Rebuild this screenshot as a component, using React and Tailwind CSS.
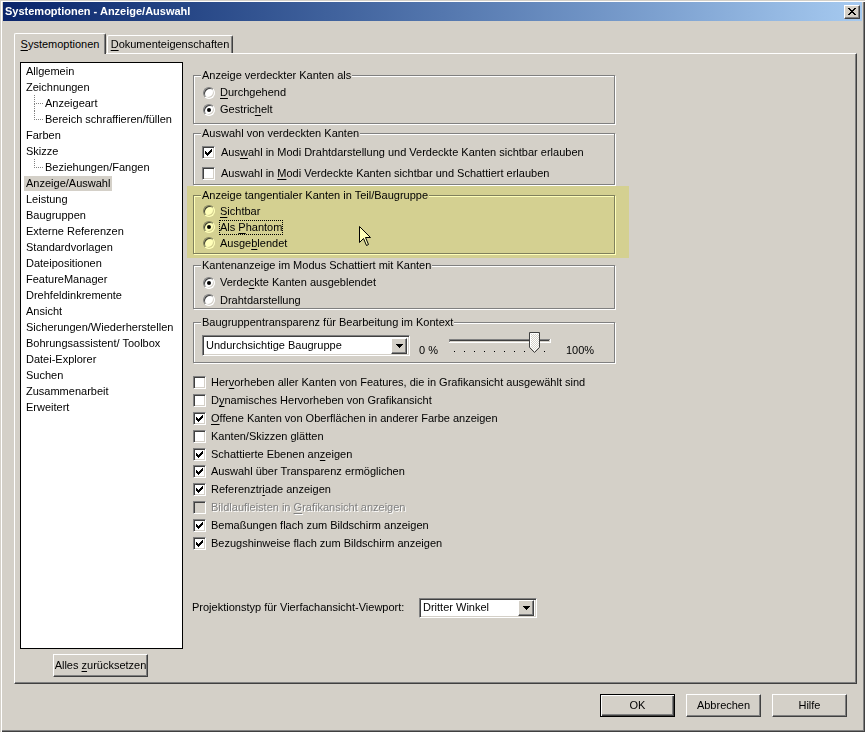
import React from 'react';

const raised = 'border border-t-white border-l-white border-r-[#404040] border-b-[#404040] shadow-[inset_-1px_-1px_0_#808080]';
const sunken = 'border border-t-[#808080] border-l-[#808080] border-r-white border-b-white shadow-[inset_1px_1px_0_#404040,inset_-1px_-1px_0_#d4d0c8]';

function U({ children }) {
  return <span className="underline underline-offset-[2px]">{children}</span>;
}

function Radio({ checked }) {
  return (
    <span className="flex h-3 w-3 shrink-0 items-center justify-center rounded-full border border-t-[#808080] border-l-[#808080] border-r-white border-b-white bg-white shadow-[inset_1px_1px_0_#404040,inset_-1px_-1px_0_#d4d0c8]">
      {checked && <span className="h-1 w-1 rounded-full bg-black" />}
    </span>
  );
}

function Check({ checked, disabled }) {
  return (
    <span className={`flex h-[13px] w-[13px] shrink-0 items-center justify-center ${sunken} ${disabled ? 'bg-[#d4d0c8]' : 'bg-white'}`}>
      {checked && (
        <svg width="7" height="7" viewBox="0 0 7 7" shapeRendering="crispEdges">
          {[2, 3, 4, 3, 2, 1, 0].map((y, x) => (
            <rect key={x} x={x} y={y} width="1" height="3" fill="#000" />
          ))}
        </svg>
      )}
    </span>
  );
}

function Arrow() {
  return (
    <svg width="7" height="4" viewBox="0 0 7 4" shapeRendering="crispEdges">
      <rect x="0" y="0" width="7" height="1" />
      <rect x="1" y="1" width="5" height="1" />
      <rect x="2" y="2" width="3" height="1" />
      <rect x="3" y="3" width="1" height="1" />
    </svg>
  );
}

function Combo({ value, className }) {
  return (
    <div className={`flex items-center bg-white pl-[3px] pr-[2px] ${sunken} ${className}`}>
      <span className="flex-1 truncate">{value}</span>
      <span className={`flex h-[16px] w-[16px] shrink-0 items-center justify-center bg-[#d4d0c8] ${raised}`}>
        <Arrow />
      </span>
    </div>
  );
}

function Group({ title, children, className = '' }) {
  return (
    <fieldset className={`w-[422px] border border-[#808080] shadow-[1px_1px_0_#fff,inset_1px_1px_0_#fff] ${className}`}>
      <legend className="ml-[7px] bg-[#d4d0c8] px-[1px] leading-[13px]">{title}</legend>
      {children}
    </fieldset>
  );
}

function Branch({ last }) {
  return (
    <div className="flex h-4 w-[9px] shrink-0 flex-col">
      <div className="h-[9px] border-b border-l border-dotted border-[#808080]" />
      {!last && <div className="h-[7px] border-l border-dotted border-[#808080]" />}
    </div>
  );
}

const tree = [
  { t: 'Allgemein' },
  { t: 'Zeichnungen' },
  { t: 'Anzeigeart', c: true },
  { t: 'Bereich schraffieren/füllen', c: true, last: true },
  { t: 'Farben' },
  { t: 'Skizze' },
  { t: 'Beziehungen/Fangen', c: true, last: true },
  { t: 'Anzeige/Auswahl', sel: true },
  { t: 'Leistung' },
  { t: 'Baugruppen' },
  { t: 'Externe Referenzen' },
  { t: 'Standardvorlagen' },
  { t: 'Dateipositionen' },
  { t: 'FeatureManager' },
  { t: 'Drehfeldinkremente' },
  { t: 'Ansicht' },
  { t: 'Sicherungen/Wiederherstellen' },
  { t: 'Bohrungsassistent/ Toolbox' },
  { t: 'Datei-Explorer' },
  { t: 'Suchen' },
  { t: 'Zusammenarbeit' },
  { t: 'Erweitert' },
];

const options = [
  [false, <>Her<U>v</U>orheben aller Kanten von Features, die in Grafikansicht ausgewählt sind</>],
  [false, <>D<U>y</U>namisches Hervorheben von Grafikansicht</>],
  [true, <><U>O</U>ffene Kanten von Oberflächen in anderer Farbe anzeigen</>],
  [false, 'Kanten/Skizzen glätten'],
  [true, <>Schattierte Ebenen an<U>z</U>eigen</>],
  [true, 'Auswahl über Transparenz ermöglichen'],
  [true, <>Referenztr<U>i</U>ade anzeigen</>],
  [false, <>Bildlaufleisten in <U>G</U>rafikansicht anzeigen</>, true],
  [true, 'Bemaßungen flach zum Bildschirm anzeigen'],
  [true, 'Bezugshinweise flach zum Bildschirm anzeigen'],
];

function Slider() {
  const ticks = [10, 20, 30, 40, 50, 60, 70, 80, 90, 100];
  return (
    <svg width="112" height="24" viewBox="0 0 112 24" shapeRendering="crispEdges" className="-mt-[5px] shrink-0">
      <defs>
        <pattern id="dither" width="2" height="2" patternUnits="userSpaceOnUse">
          <rect width="2" height="2" fill="#d4d0c8" />
          <rect width="1" height="1" fill="#fff" />
          <rect x="1" y="1" width="1" height="1" fill="#fff" />
        </pattern>
      </defs>
      <rect x="5" y="9" width="101" height="1" fill="#808080" />
      <rect x="5" y="9" width="1" height="4" fill="#808080" />
      <rect x="6" y="10" width="99" height="1" fill="#404040" />
      <rect x="6" y="11" width="99" height="1" fill="#d4d0c8" />
      <rect x="5" y="12" width="102" height="1" fill="#fff" />
      <rect x="106" y="9" width="1" height="4" fill="#fff" />
      {ticks.map((x) => (
        <rect key={x} x={x} y="21" width="1" height="1" fill="#000" />
      ))}
      <polygon points="85.5,2.5 95.5,2.5 95.5,17.5 90.5,22.5 85.5,17.5" fill="url(#dither)" stroke="#404040" strokeWidth="1" shapeRendering="auto" />
      <polyline points="86.5,17 86.5,3.5 94.5,3.5" fill="none" stroke="#fff" strokeWidth="1" shapeRendering="auto" />
    </svg>
  );
}

export default function App() {
  return (
    <div className="flex h-[732px] w-[865px] flex-col overflow-hidden bg-[#d4d0c8] px-[3px] pt-[2px] font-['Liberation_Sans',Arial,sans-serif] text-[11px] leading-[13px] text-black shadow-[inset_1px_1px_0_#d4d0c8,inset_2px_2px_0_#fff,inset_-1px_-1px_0_#404040,inset_-2px_-2px_0_#808080]">
      {/* Titelleiste */}
      <div className="flex h-[19px] shrink-0 items-center bg-linear-to-r from-[#0a246a] to-[#a6caf0] pl-[2px] pr-[2px]">
        <span className="font-bold text-white">Systemoptionen - Anzeige/Auswahl</span>
        <span className={`ml-auto flex h-[14px] w-[16px] items-center justify-center bg-[#d4d0c8] ${raised}`}>
          <svg width="8" height="7" viewBox="0 0 8 7" shapeRendering="crispEdges">
            <path d="M0 0h2v1h-2zM6 0h2v1h-2zM1 1h2v1h-2zM5 1h2v1h-2zM2 2h4v1h-4zM3 3h2v1h-2zM2 4h4v1h-4zM1 5h2v1h-2zM5 5h2v1h-2zM0 6h2v1h-2zM6 6h2v1h-2z" />
          </svg>
        </span>
      </div>

      {/* Reiter */}
      <div className="mt-[12px] flex items-end pl-[11px]">
        <div className="relative z-10 -mb-px flex h-[21px] w-[92px] items-center justify-center rounded-t-[2px] border-t border-l border-r border-t-white border-l-white border-r-[#404040] bg-[#d4d0c8] shadow-[inset_-1px_0_0_#808080]">
          <span><U>S</U>ystemoptionen</span>
        </div>
        <div className="ml-[1px] flex h-[18px] w-[126px] items-center justify-center rounded-t-[2px] border-t border-l border-r border-t-white border-l-white border-r-[#404040] shadow-[inset_-1px_0_0_#808080]">
          <span><U>D</U>okumenteigenschaften</span>
        </div>
      </div>

      {/* Registerkarte */}
      <div className={`ml-[11px] flex h-[631px] w-[843px] shrink-0 ${raised}`}>
        {/* Baum */}
        <div className="flex w-[168px] shrink-0 flex-col pl-[5px] pt-[8px]">
          <div className="h-[587px] w-[163px] border border-black bg-white pl-[3px]">
            {tree.map((it) => (
              <div key={it.t} className="flex h-4 items-center">
                {it.c && <div className="ml-[10px] flex"><Branch last={it.last} /></div>}
                <span className={`whitespace-nowrap px-[2px] leading-[15px] ${it.sel ? 'bg-[#d4d0c8]' : ''}`}>{it.t}</span>
              </div>
            ))}
          </div>
          <button className={`ml-[33px] mt-[5px] h-[23px] w-[95px] bg-[#d4d0c8] ${raised}`}>
            Alles <U>z</U>urücksetzen
          </button>
        </div>

        {/* Optionen */}
        <div className="ml-[10px] flex flex-col pt-[15px]">
          <Group title="Anzeige verdeckter Kanten als">
            <div className="pl-[9px] pt-[2px] pb-[5px]">
              <div className="flex h-[17px] items-center gap-[5px]"><Radio /><span><U>D</U>urchgehend</span></div>
              <div className="flex h-[17px] items-center gap-[5px]"><Radio checked /><span>Gestric<U>h</U>elt</span></div>
            </div>
          </Group>

          <Group title="Auswahl von verdeckten Kanten" className="mt-[3px]">
            <div className="pl-[8px] pt-[2px]">
              <div className="flex h-[21px] items-center gap-[6px]"><Check checked /><span>Aus<U>w</U>ahl in Modi Drahtdarstellung und Verdeckte Kanten sichtbar erlauben</span></div>
              <div className="flex h-[21px] items-center gap-[6px]"><Check /><span>Auswahl in <U>M</U>odi Verdeckte Kanten sichtbar und Schattiert erlauben</span></div>
            </div>
          </Group>

          <div className="relative -ml-[6px] mt-[1px] w-[442px] px-[6px] pt-[3px] pb-[4px]">
            <Group title="Anzeige tangentialer Kanten in Teil/Baugruppe">
              <div className="pl-[9px] pt-[1px] pb-[2px]">
                <div className="flex h-4 items-center gap-[4px]"><Radio /><span className="border border-transparent"><U>S</U>ichtbar</span></div>
                <div className="flex h-4 items-center gap-[4px]"><Radio checked /><span className="border border-dotted border-black">Als <U>P</U>hantom</span></div>
                <div className="flex h-4 items-center gap-[4px]"><Radio /><span className="border border-transparent">Ausge<U>b</U>lendet</span></div>
              </div>
            </Group>
            <svg width="13" height="21" viewBox="0 0 13 21" className="pointer-events-none absolute left-[172px] top-[40px]">
              <path d="M0.5 0.5 L0.5 16.5 L4.5 12.5 L7.5 19.5 L9.5 18.5 L6.5 11.5 L11.5 11.5 Z" fill="#fff" stroke="#000" strokeWidth="1" strokeLinejoin="miter" />
            </svg>
            <div className="pointer-events-none absolute inset-0 bg-[#ffffb9] mix-blend-multiply" />
          </div>

          <Group title="Kantenanzeige im Modus Schattiert mit Kanten" className="mt-[1px]">
            <div className="pl-[9px] pt-[1px]">
              <div className="flex h-[19px] items-center gap-[5px]"><Radio checked /><span>Verde<U>c</U>kte Kanten ausgeblendet</span></div>
              <div className="flex h-[16px] items-center gap-[5px]"><Radio /><span>Drahtdarstellung</span></div>
            </div>
          </Group>

          <Group title="Baugruppentransparenz für Bearbeitung im Kontext" className="mt-[7px]">
            <div className="flex items-start pl-[8px] pt-[6px] pb-[5px]">
              <Combo value="Undurchsichtige Baugruppe" className="h-[21px] w-[208px]" />
              <span className="ml-[9px] mt-[9px] w-[25px]">0 %</span>
              <Slider />
              <span className="ml-[10px] mt-[9px]">100%</span>
            </div>
          </Group>

          <div className="mt-[11px] flex flex-col">
            {options.map(([checked, label, disabled], i) => (
              <div key={i} className="flex h-[17.8px] items-center gap-[5px]">
                <Check checked={checked} disabled={disabled} />
                <span className={disabled ? 'text-[#808080] [text-shadow:1px_1px_0_#fff]' : ''}>{label}</span>
              </div>
            ))}
          </div>

          <div className="-ml-[1px] mt-[46px] flex items-center">
            <span className="w-[227px]">Projektionstyp für Vierfachansicht-Viewport:</span>
            <Combo value="Dritter Winkel" className="h-[20px] w-[118px]" />
          </div>
        </div>
      </div>

      {/* Schaltflächen */}
      <div className="mt-[10px] flex justify-end gap-[11px] pr-[15px]">
        <button className="h-[23px] w-[75px] border border-black bg-[#d4d0c8] shadow-[inset_1px_1px_0_#fff,inset_-1px_-1px_0_#404040,inset_-2px_-2px_0_#808080]">OK</button>
        <button className={`h-[23px] w-[75px] bg-[#d4d0c8] ${raised}`}>Abbrechen</button>
        <button className={`h-[23px] w-[75px] bg-[#d4d0c8] ${raised}`}>Hilfe</button>
      </div>
    </div>
  );
}
